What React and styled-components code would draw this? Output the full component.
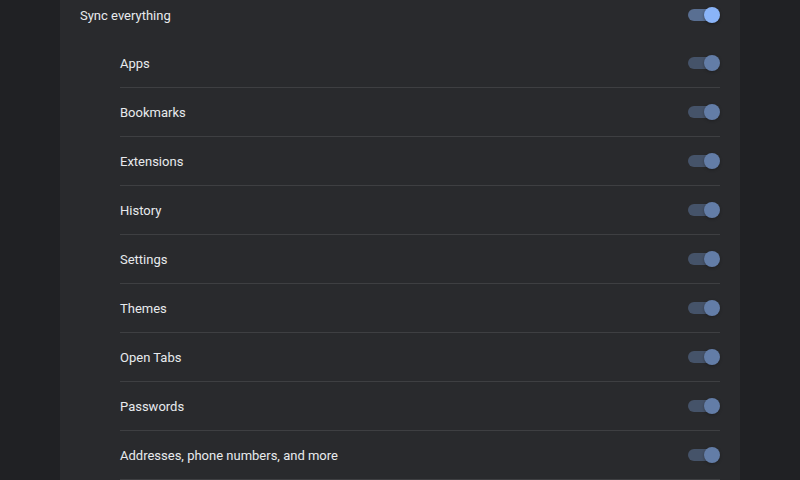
import React, { useState } from "react";
import styled, { createGlobalStyle } from "styled-components";

const GlobalStyle = createGlobalStyle`
  html, body {
    margin: 0;
    padding: 0;
    background: #202124;
    font-family: Roboto, "Liberation Sans", sans-serif;
    overflow: hidden;
  }
`;

const Page = styled.div`
  display: flex;
  justify-content: center;
  height: 480px;
  background: #202124;
`;

const Card = styled.div`
  width: 680px;
  background: #292a2d;
  padding: 0 20px;
  box-sizing: border-box;
`;

const MainRow = styled.div`
  display: flex;
  align-items: center;
  justify-content: space-between;
  height: 30px;
  margin-bottom: 9px;
  color: #e8eaed;
  font-size: 13px;
`;

const List = styled.div`
  padding-left: 40px;
`;

const Row = styled.div`
  display: flex;
  align-items: center;
  justify-content: space-between;
  height: 48px;
  border-bottom: 1px solid rgba(255, 255, 255, 0.1);
  color: #e8eaed;
  font-size: 13px;
`;

const Track = styled.button`
  position: relative;
  width: 28px;
  height: 12px;
  border: none;
  padding: 0;
  margin-right: 4px;
  border-radius: 6px;
  background: ${(p) => (p.on ? "rgba(138, 180, 248, 0.5)" : "#5f6368")};
  opacity: ${(p) => (p.disabled ? 0.6 : 1)};
  cursor: pointer;
`;

const Knob = styled.span`
  position: absolute;
  top: -2px;
  left: ${(p) => (p.on ? "16px" : "-4px")};
  width: 16px;
  height: 16px;
  border-radius: 50%;
  background: ${(p) => (p.on ? "#8ab4f8" : "#dadce0")};
  box-shadow: 0 1px 3px rgba(0, 0, 0, 0.4);
`;

const Toggle = ({ on, disabled, onClick }) => (
  <Track on={on} disabled={disabled} onClick={onClick}>
    <Knob on={on} />
  </Track>
);

const items = [
  "Apps",
  "Bookmarks",
  "Extensions",
  "History",
  "Settings",
  "Themes",
  "Open Tabs",
  "Passwords",
  "Addresses, phone numbers, and more",
];

export default function App() {
  const [syncAll, setSyncAll] = useState(true);

  return (
    <Page>
      <GlobalStyle />
      <Card>
        <MainRow>
          <span>Sync everything</span>
          <Toggle on={syncAll} onClick={() => setSyncAll(!syncAll)} />
        </MainRow>
        <List>
          {items.map((name) => (
            <Row key={name}>
              <span>{name}</span>
              <Toggle on disabled={syncAll} />
            </Row>
          ))}
        </List>
      </Card>
    </Page>
  );
}
